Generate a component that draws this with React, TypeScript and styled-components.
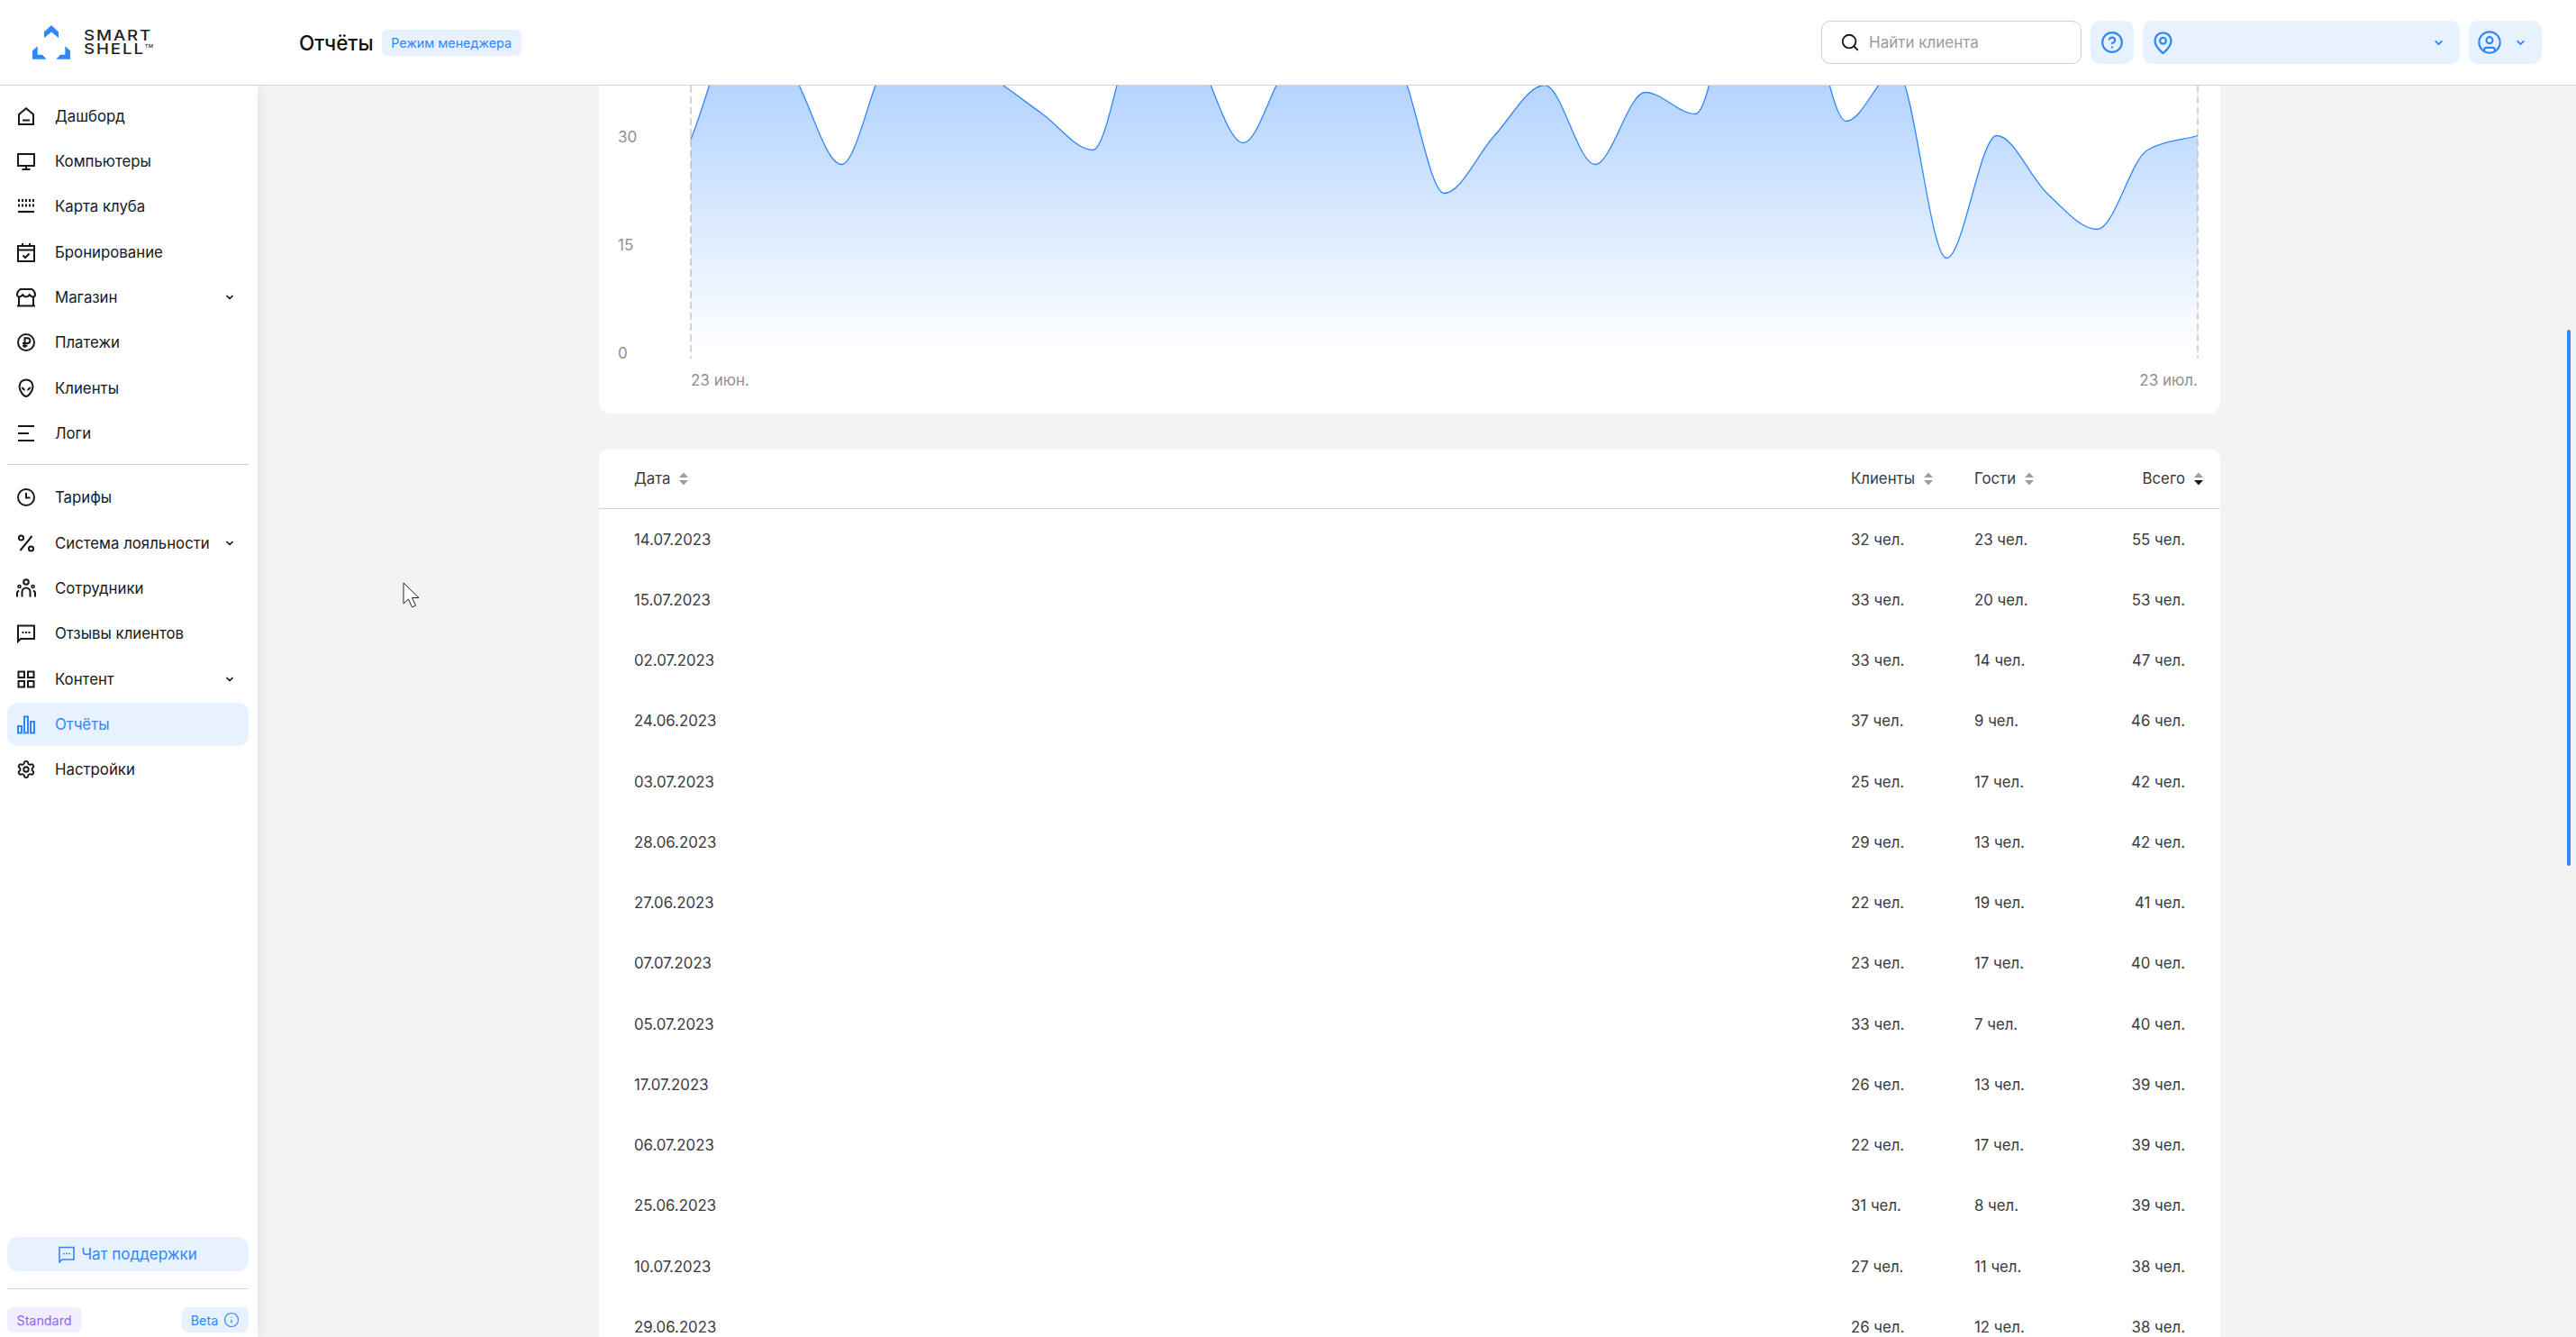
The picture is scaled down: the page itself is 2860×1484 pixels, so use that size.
import React from "react";
import styled, { createGlobalStyle } from "styled-components";
import { ChevronDown, CircleHelp, CircleUser, Info, MapPin, Search, Settings } from "lucide-react";

const BLUE = "#2f86ff";
const INK = "#17181b";

const GlobalStyle = createGlobalStyle`
    html, body {
        margin: 0;
        padding: 0;
        background: #f3f3f3;
    }
    * {
        box-sizing: border-box;
    }
    body {
        font-family: Inter, "Noto Sans", sans-serif;
        color: ${INK};
    }
`;

const Page = styled.div`
    display: flex;
    flex-direction: column;
    height: 100vh;
    overflow: hidden;
`;

const Header = styled.header`
    display: flex;
    align-items: center;
    flex: 0 0 95px;
    background: #fff;
    border-bottom: 1px solid #d3d3d5;
    position: relative;
    z-index: 3;
`;

const LogoBlock = styled.div`
    display: flex;
    align-items: center;
    gap: 15px;
    width: 332px;
    padding-left: 36px;
`;

const LogoText = styled.div`
    font-size: 16px;
    line-height: 15px;
    font-weight: 500;
    letter-spacing: 1.6px;
    color: #1d1e22;
    transform: scaleX(1.17);
    transform-origin: left center;

    sup {
        font-size: 5px;
        line-height: 0;
        letter-spacing: 0;
        vertical-align: 7px;
    }
`;

const Title = styled.h1`
    margin: 0;
    font-size: 22.5px;
    font-weight: 500;
    color: #111;
`;

const ModeBadge = styled.span`
    display: flex;
    align-items: center;
    justify-content: center;
    width: 155px;
    height: 29px;
    margin-left: 9px;
    border-radius: 6px;
    background: #e7f1ff;
    color: ${BLUE};
    font-size: 14.3px;
`;

const HeaderRight = styled.div`
    display: flex;
    align-items: center;
    gap: 10px;
    margin-left: auto;
    padding-right: 38px;
`;

const SearchBox = styled.div`
    display: flex;
    align-items: center;
    gap: 10px;
    width: 289px;
    height: 48px;
    padding-left: 20px;
    border: 1px solid #cfcfd2;
    border-radius: 10px;
    background: #fff;
    color: #9b9ba0;
    font-size: 17px;
`;

const BlueButton = styled.div<{ $width: number; $center?: boolean }>`
    display: flex;
    align-items: center;
    justify-content: ${(p) => (p.$center ? "center" : "space-between")};
    width: ${(p) => p.$width}px;
    height: 48px;
    padding: ${(p) => (p.$center ? "0" : "0 17px 0 9px")};
    border-radius: 10px;
    background: #e7f1ff;
    color: ${BLUE};
`;

const Body = styled.div`
    display: flex;
    flex: 1;
    min-height: 0;
`;

const Sidebar = styled.aside`
    display: flex;
    flex-direction: column;
    flex: 0 0 286px;
    width: 286px;
    min-width: 0;
    padding: 9.5px 10px 5px 8px;
    background: #fff;
    box-shadow: 2px 0 14px rgba(30, 30, 50, 0.07);
    position: relative;
    z-index: 2;
`;

const NavList = styled.nav`
    display: flex;
    flex-direction: column;
    gap: 2.35px;
`;

const NavItem = styled.div<{ $active?: boolean }>`
    display: flex;
    align-items: center;
    height: 48px;
    padding: 0 15px 0 10px;
    border-radius: 12px;
    background: ${(p) => (p.$active ? "#e7f1ff" : "transparent")};
    color: ${(p) => (p.$active ? BLUE : INK)};
    font-size: 16.8px;
    white-space: nowrap;

    svg.nav-icon {
        flex: 0 0 22px;
        margin-right: 21px;
    }
`;

const NavChevron = styled(ChevronDown)`
    margin-left: auto;
    flex: 0 0 12px;
`;

const Divider = styled.hr`
    width: 100%;
    margin: 0;
    border: 0;
    border-top: 1px solid #d3d3d5;
`;

const NavDivider = styled(Divider)`
    margin: 10px 0 12.5px;
`;

const SidebarFooter = styled.div`
    display: flex;
    flex-direction: column;
    margin-top: auto;
`;

const ChatButton = styled.div`
    display: flex;
    align-items: center;
    justify-content: center;
    gap: 7px;
    height: 38px;
    border-radius: 12px;
    background: #e7f1ff;
    color: ${BLUE};
    font-size: 17px;
`;

const FooterDivider = styled(Divider)`
    margin: 19px 0 20px;
`;

const BadgeRow = styled.div`
    display: flex;
    justify-content: space-between;
`;

const PlanBadge = styled.span<{ $purple?: boolean; $width: number }>`
    display: flex;
    align-items: center;
    justify-content: center;
    gap: 6px;
    width: ${(p) => p.$width}px;
    height: 28px;
    border-radius: 6px;
    background: ${(p) => (p.$purple ? "#f2edff" : "#e7f1ff")};
    color: ${(p) => (p.$purple ? "#9364f6" : BLUE)};
    font-size: 14.3px;
`;

const Main = styled.main`
    flex: 1;
    min-width: 0;
    padding-left: 379px;
    position: relative;
    overflow: hidden;
`;

const ScrollThumb = styled.div`
    position: absolute;
    top: 271px;
    right: 6px;
    width: 4px;
    height: 595px;
    border-radius: 2px;
    background: ${BLUE};
`;

const PointerMark = styled.svg`
    position: absolute;
    left: 161px;
    top: 551px;
`;

const Content = styled.div`
    display: flex;
    flex-direction: column;
    gap: 39px;
    width: 1800px;
`;

const ChartCard = styled.section`
    height: 364px;
    border-radius: 0 0 12px 12px;
    background: #fff;
    overflow: hidden;
`;

const ChartSvg = styled.svg`
    display: block;

    text {
        font-family: Inter, sans-serif;
        font-size: 17px;
        fill: #8f8f94;
    }
`;

const TableCard = styled.section`
    border-radius: 12px 12px 0 0;
    background: #fff;
`;

const TableHead = styled.div`
    display: grid;
    grid-template-columns: 1351px 137px 137px 117px;
    align-items: center;
    height: 67px;
    padding: 0 19px 0 39px;
    border-bottom: 1px solid #d3d3d5;
    color: #3a3a3e;
    font-size: 16.8px;
`;

const HeadCell = styled.div<{ $right?: boolean }>`
    display: flex;
    align-items: center;
    justify-content: ${(p) => (p.$right ? "flex-end" : "flex-start")};
    gap: 10px;
`;

const TableRow = styled.div`
    display: grid;
    grid-template-columns: 1351px 137px 137px 97px;
    align-items: center;
    height: 67.25px;
    padding: 0 39px;
    color: #3a3a3e;
    font-size: 16.8px;
`;

const TotalCell = styled.div`
    text-align: right;
`;

const SortIcon = ({ active }: { active?: boolean }) => (
    <svg width="10" height="15" viewBox="0 0 10 15">
        <path d="M5 0.5 10 6H0z" fill="#9c9ca3" />
        <path d="M5 14.5 0 9h10z" fill={active ? INK : "#9c9ca3"} />
    </svg>
);

const LogoMark = () => (
    <svg width="42" height="38" viewBox="0 0 42 38" fill={BLUE}>
        <path d="M13 7.5 21 0l8 7.5V14l-8-6.5-8 6.5z" />
        <path d="M5.7 23.3 0 28.3v9.4h15.7l-4.7-5H5.7z" />
        <path d="M36.3 23.3 42 28.3v9.4H26.3l4.7-5h5.3z" />
    </svg>
);

const NavIcon = ({ children }: { children: React.ReactNode }) => (
    <svg
        className="nav-icon"
        width="22"
        height="22"
        viewBox="0 0 22 22"
        fill="none"
        stroke="currentColor"
        strokeWidth="2"
    >
        {children}
    </svg>
);

const icons: Record<string, React.ReactNode> = {
    home: (
        <>
            <path d="M3 9 11 2.200 19 9v11H3z" />
            <path d="M7 15.500h8" />
        </>
    ),
    monitor: (
        <>
            <path d="M2 3h18v13H2z" />
            <path d="M11 16v4M6.500 20h9" />
        </>
    ),
    map: (
        <>
            <path d="M2 4.500h18M2 10h18" strokeDasharray="2 2" strokeWidth="3" />
            <path d="M2 17h18" strokeWidth="2.200" />
        </>
    ),
    calendar: (
        <>
            <path d="M2 4h18v17H2zM2 8.500h18M7 1v4M15 1v4" />
            <path d="M7.500 14.500 10 17l4.500-4.500" />
        </>
    ),
    store: (
        <>
            <path d="M4.500 2h13c2 1.300 3.500 3.600 3.500 6 0 1.500-1.200 2.600-2.600 2.600-1.300 0-2.500-1-3.600-2.400-1 1.400-2.300 2.400-3.800 2.400s-2.800-1-3.800-2.400c-1.100 1.400-2.300 2.400-3.600 2.400C2.200 10.600 1 9.500 1 8c0-2.400 1.500-4.700 3.500-6z" />
            <path d="M3 11v9.500h16V11M1 20.500h20" />
        </>
    ),
    ruble: (
        <>
            <circle cx="11" cy="11" r="9" />
            <path d="M9.500 17V6.200h3a2.900 2.900 0 0 1 0 5.800H7M7 14.700h5.500" />
        </>
    ),
    alien: (
        <>
            <path d="M11 1.500C6.800 1.500 3.500 4.500 3.500 9c0 5 4.800 11 7.500 11s7.500-6 7.500-11c0-4.500-3.300-7.500-7.500-7.500z" />
            <path d="M5.500 9.500c2.300 .1 4 1.500 4.600 4-2.300-.1-4-1.500-4.600-4zM16.500 9.500c-2.300 .1-4 1.500-4.600 4 2.300-.1 4-1.500 4.600-4z" fill="currentColor" stroke="none" />
        </>
    ),
    logs: <path d="M2 3h18M2 11h12M2 19h18" />,
    clock: (
        <>
            <circle cx="11" cy="11" r="9" />
            <path d="M11 6v5.500h4.500" />
        </>
    ),
    percent: (
        <>
            <circle cx="5.500" cy="5" r="2.600" />
            <circle cx="16.500" cy="17" r="2.600" />
            <path d="M17.500 3 4.500 19" />
        </>
    ),
    staff: (
        <>
            <circle cx="11" cy="4" r="2.800" />
            <path d="M6.500 20.500V15a4.500 4.500 0 0 1 9 0v5.500" />
            <circle cx="3.500" cy="9" r="1.500" strokeWidth="1.600" />
            <circle cx="18.500" cy="9" r="1.500" strokeWidth="1.600" />
            <path d="M1 20.500V16.500c0-1.500 1-2.500 2.200-2.700M21 20.500V16.500c0-1.500-1-2.500-2.200-2.700" />
        </>
    ),
    reviews: (
        <>
            <path d="M2 2.500h18V17H5l-3 3z" />
            <path d="M6.500 10h9" strokeDasharray="2 1.500" />
        </>
    ),
    content: (
        <>
            <path d="M2.500 2.500h6.500V9H2.500zM13 2.500h6.500V9H13zM2.500 13h6.500v6.500H2.500zM13 13h6.500v6.500H13z" />
        </>
    ),
    reports: <path d="M2 13h4v7.500H2zM9 2.500h4v18H9zM16 8h4v12.500h-4z" />,
};

type NavEntry = { label: string; icon: string; chevron?: boolean; active?: boolean };

const navTop: NavEntry[] = [
    { label: "Дашборд", icon: "home" },
    { label: "Компьютеры", icon: "monitor" },
    { label: "Карта клуба", icon: "map" },
    { label: "Бронирование", icon: "calendar" },
    { label: "Магазин", icon: "store", chevron: true },
    { label: "Платежи", icon: "ruble" },
    { label: "Клиенты", icon: "alien" },
    { label: "Логи", icon: "logs" },
];

const navBottom: NavEntry[] = [
    { label: "Тарифы", icon: "clock" },
    { label: "Система лояльности", icon: "percent", chevron: true },
    { label: "Сотрудники", icon: "staff" },
    { label: "Отзывы клиентов", icon: "reviews" },
    { label: "Контент", icon: "content", chevron: true },
    { label: "Отчёты", icon: "reports", active: true },
];

const renderNav = (list: NavEntry[]) =>
    list.map((item) => (
        <NavItem key={item.label} $active={item.active}>
            <NavIcon>{icons[item.icon]}</NavIcon>
            {item.label}
            {item.chevron && <NavChevron size={12} strokeWidth={3.5} />}
        </NavItem>
    ));

const visits = [
    29.5, 46, 39, 26, 41, 42, 38, 33, 28, 47, 42, 29, 40, 39, 40, 22, 30, 37, 26, 36, 33, 55, 53, 32, 39, 13,
    30, 22, 17, 28, 30,
];

const rows = [
    ["14.07.2023", 32, 23, 55],
    ["15.07.2023", 33, 20, 53],
    ["02.07.2023", 33, 14, 47],
    ["24.06.2023", 37, 9, 46],
    ["03.07.2023", 25, 17, 42],
    ["28.06.2023", 29, 13, 42],
    ["27.06.2023", 22, 19, 41],
    ["07.07.2023", 23, 17, 40],
    ["05.07.2023", 33, 7, 40],
    ["17.07.2023", 26, 13, 39],
    ["06.07.2023", 22, 17, 39],
    ["25.06.2023", 31, 8, 39],
    ["10.07.2023", 27, 11, 38],
    ["29.06.2023", 26, 12, 38],
];

const PLOT_LEFT = 102;
const PLOT_RIGHT = 1775;
const ZERO_Y = 295.5;
const UNIT = 8;

// same maths as a monotone-x curve
function monotonePath(points: [number, number][]) {
    const n = points.length;
    const slopes: number[] = [];
    for (let i = 0; i < n - 1; i++) {
        slopes.push((points[i + 1][1] - points[i][1]) / (points[i + 1][0] - points[i][0]));
    }
    const tangents = points.map((_, i) => {
        if (i === 0) return slopes[0];
        if (i === n - 1) return slopes[n - 2];
        const a = slopes[i - 1];
        const b = slopes[i];
        if (a * b <= 0) return 0;
        return (Math.sign(a) + Math.sign(b)) * Math.min(Math.abs(a), Math.abs(b), Math.abs(a + b) / 4);
    });
    let d = `M${points[0][0]} ${points[0][1]}`;
    for (let i = 0; i < n - 1; i++) {
        const h = (points[i + 1][0] - points[i][0]) / 3;
        d += `C${points[i][0] + h} ${points[i][1] + h * tangents[i]} ${points[i + 1][0] - h} ${
            points[i + 1][1] - h * tangents[i + 1]
        } ${points[i + 1][0]} ${points[i + 1][1]}`;
    }
    return d;
}

const Chart = () => {
    const step = (PLOT_RIGHT - PLOT_LEFT) / (visits.length - 1);
    const line = monotonePath(visits.map((v, i) => [PLOT_LEFT + i * step, ZERO_Y - v * UNIT]));
    return (
        <ChartSvg width="1800" height="364">
            <defs>
                <linearGradient id="visits" gradientUnits="userSpaceOnUse" x1="0" y1="-143" x2="0" y2={ZERO_Y}>
                    <stop offset="0" stopColor={BLUE} stopOpacity="0.53" />
                    <stop offset="1" stopColor={BLUE} stopOpacity="0" />
                </linearGradient>
            </defs>
            <path d={`${line}V${ZERO_Y}H${PLOT_LEFT}Z`} fill="url(#visits)" />
            <path d={`M${PLOT_LEFT} 0V303M${PLOT_RIGHT} 0V303`} stroke="#a9a9ae" strokeWidth="1" strokeDasharray="8 4" />
            <path d={line} fill="none" stroke={BLUE} strokeWidth="1.3" />
            <text x="21" y="58.5" dominantBaseline="middle">30</text>
            <text x="21" y="178.5" dominantBaseline="middle">15</text>
            <text x="21" y="298.5" dominantBaseline="middle">0</text>
            <text x={PLOT_LEFT} y="328" dominantBaseline="middle">23 июн.</text>
            <text x={PLOT_RIGHT} y="328" dominantBaseline="middle" textAnchor="end">23 июл.</text>
        </ChartSvg>
    );
};

const App = () => {
    return (
        <Page>
            <GlobalStyle />
            <Header>
                <LogoBlock>
                    <LogoMark />
                    <LogoText>
                        SMART
                        <br />
                        SHELL<sup>TM</sup>
                    </LogoText>
                </LogoBlock>
                <Title>Отчёты</Title>
                <ModeBadge>Режим менеджера</ModeBadge>
                <HeaderRight>
                    <SearchBox>
                        <Search size={22} color={INK} strokeWidth={2} />
                        Найти клиента
                    </SearchBox>
                    <BlueButton $width={48} $center>
                        <CircleHelp size={26} strokeWidth={2} />
                    </BlueButton>
                    <BlueButton $width={352}>
                        <MapPin size={27} strokeWidth={2} />
                        <ChevronDown size={13} strokeWidth={3.5} />
                    </BlueButton>
                    <BlueButton $width={81}>
                        <CircleUser size={28} strokeWidth={1.8} />
                        <ChevronDown size={13} strokeWidth={3.5} />
                    </BlueButton>
                </HeaderRight>
            </Header>
            <Body>
                <Sidebar>
                    <NavList>{renderNav(navTop)}</NavList>
                    <NavDivider />
                    <NavList>
                        {renderNav(navBottom)}
                        <NavItem>
                            <Settings className="nav-icon" size={22} strokeWidth={2} />
                            Настройки
                        </NavItem>
                    </NavList>
                    <SidebarFooter>
                        <ChatButton>
                            <svg width="18" height="19" viewBox="0 0 18 19" fill="none" stroke="currentColor" strokeWidth="1.6">
                                <path d="M1 1.500h16V15H4l-3 3z" />
                                <path d="M5 8.500h8" strokeDasharray="1.800 1.300" />
                            </svg>
                            Чат поддержки
                        </ChatButton>
                        <FooterDivider />
                        <BadgeRow>
                            <PlanBadge $purple $width={82}>Standard</PlanBadge>
                            <PlanBadge $width={74}>
                                Beta
                                <Info size={18} strokeWidth={1.6} />
                            </PlanBadge>
                        </BadgeRow>
                    </SidebarFooter>
                </Sidebar>
                <Main>
                    <Content>
                        <ChartCard>
                            <Chart />
                        </ChartCard>
                        <TableCard>
                            <TableHead>
                                <HeadCell>Дата <SortIcon /></HeadCell>
                                <HeadCell>Клиенты <SortIcon /></HeadCell>
                                <HeadCell>Гости <SortIcon /></HeadCell>
                                <HeadCell $right>Всего <SortIcon active /></HeadCell>
                            </TableHead>
                            {rows.map((row) => (
                                <TableRow key={row[0]}>
                                    <div>{row[0]}</div>
                                    <div>{row[1]} чел.</div>
                                    <div>{row[2]} чел.</div>
                                    <TotalCell>{row[3]} чел.</TotalCell>
                                </TableRow>
                            ))}
                        </TableCard>
                    </Content>
                    <ScrollThumb />
                    <PointerMark width="20" height="29" viewBox="0 0 20 29">
                        <path d="M1 1v23l5.500-5 4 9 4-1.800-4-8.700H18z" fill="#fff" stroke="#26262a" strokeWidth="1" />
                    </PointerMark>
                </Main>
            </Body>
        </Page>
    );
};

export default App;
